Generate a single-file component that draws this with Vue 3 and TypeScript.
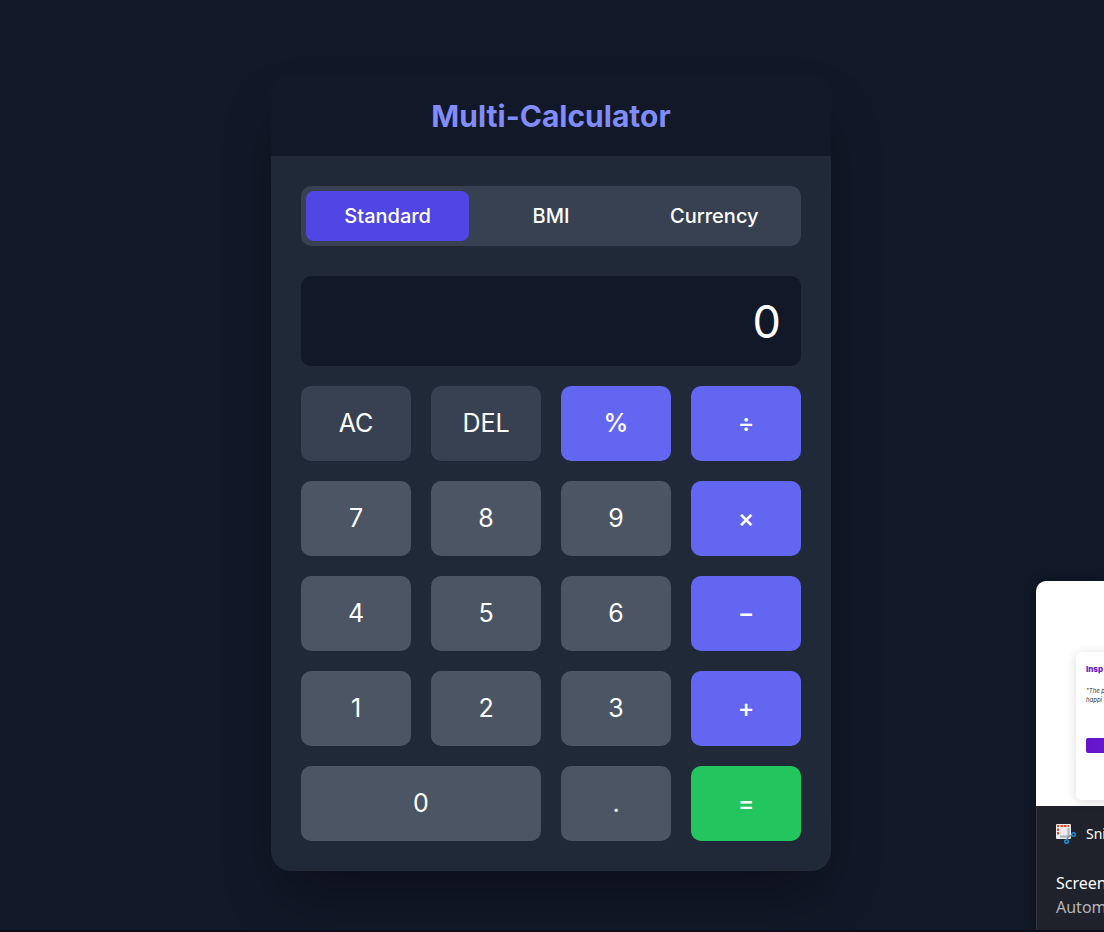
<script setup lang="ts">
import { ref } from 'vue'

type KeyKind = 'digit' | 'function' | 'operator' | 'equals'

interface Key {
  label: string
  kind: KeyKind
  wide?: boolean
}

const tabs: string[] = ['Standard', 'BMI', 'Currency']
const activeTab = ref('Standard')
const display = ref('0')
const stored = ref<number | null>(null)
const pending = ref('')
const fresh = ref(true)

const keys: Key[] = [
  { label: 'AC', kind: 'function' },
  { label: 'DEL', kind: 'function' },
  { label: '%', kind: 'operator' },
  { label: '÷', kind: 'operator' },
  { label: '7', kind: 'digit' },
  { label: '8', kind: 'digit' },
  { label: '9', kind: 'digit' },
  { label: '×', kind: 'operator' },
  { label: '4', kind: 'digit' },
  { label: '5', kind: 'digit' },
  { label: '6', kind: 'digit' },
  { label: '−', kind: 'operator' },
  { label: '1', kind: 'digit' },
  { label: '2', kind: 'digit' },
  { label: '3', kind: 'digit' },
  { label: '+', kind: 'operator' },
  { label: '0', kind: 'digit', wide: true },
  { label: '.', kind: 'digit' },
  { label: '=', kind: 'equals' },
]

function compute(a: number, b: number, op: string): number {
  if (op === '÷') return a / b
  if (op === '×') return a * b
  if (op === '−') return a - b
  return a + b
}

function settle(): void {
  if (pending.value && stored.value !== null) {
    display.value = String(compute(stored.value, Number(display.value), pending.value))
  }
  fresh.value = true
}

function press(key: Key): void {
  if (key.label === 'AC') {
    display.value = '0'
    stored.value = null
    pending.value = ''
    fresh.value = true
  } else if (key.label === 'DEL') {
    display.value = display.value.slice(0, -1) || '0'
  } else if (key.label === '%') {
    display.value = String(Number(display.value) / 100)
  } else if (key.kind === 'operator') {
    settle()
    stored.value = Number(display.value)
    pending.value = key.label
  } else if (key.kind === 'equals') {
    settle()
    pending.value = ''
  } else if (key.label === '.') {
    if (fresh.value) display.value = '0.'
    else if (!display.value.includes('.')) display.value += '.'
    fresh.value = false
  } else {
    display.value = fresh.value || display.value === '0' ? key.label : display.value + key.label
    fresh.value = false
  }
}
</script>

<template>
  <div class="page">
    <main class="card">
      <header class="card-header">
        <h1>Multi-Calculator</h1>
      </header>
      <div class="card-body">
        <nav class="tabs">
          <button
            v-for="tab in tabs"
            :key="tab"
            type="button"
            class="tab"
            :class="{ active: tab === activeTab }"
            @click="activeTab = tab"
          >
            {{ tab }}
          </button>
        </nav>
        <input class="display" type="text" readonly aria-label="Result" :value="display" />
        <div class="keypad">
          <button
            v-for="key in keys"
            :key="key.label"
            type="button"
            class="key"
            :class="[key.kind, { wide: key.wide }]"
            @click="press(key)"
          >
            {{ key.label }}
          </button>
        </div>
      </div>
    </main>

    <aside class="toast">
      <div class="preview">
        <div class="preview-card">
          <div class="preview-title">Insp</div>
          <div class="preview-quote">"The p<br />happi</div>
          <div class="preview-button"></div>
        </div>
      </div>
      <div class="toast-body">
        <div class="toast-app">
          <svg class="app-icon" viewBox="0 0 20 20" aria-hidden="true">
            <rect x="0" y="0" width="15" height="15" rx="1" fill="#e9ecef" />
            <path
              d="M1 1h2v2H1zM4.500 1h2.500v2H4.500zM8 1h2.500v2H8zM11.500 1H13v2h-1.500zM1 4.500h2V7H1zM1 8h2v2.500H1z"
              fill="#e8481c"
            />
            <path d="M12.500 4v9M4 12.500h9" fill="none" stroke="#a9b0b8" stroke-width="2" />
            <path d="M11 15.500l1.500-3 3.500-1.500" fill="none" stroke="#7d8790" stroke-width="1.500" />
            <circle cx="17.500" cy="10.500" r="1.800" fill="none" stroke="#1b93dc" stroke-width="1.400" />
            <circle cx="10.500" cy="17.500" r="1.800" fill="none" stroke="#1b93dc" stroke-width="1.400" />
          </svg>
          <span>Sni</span>
        </div>
        <div class="toast-title">Screen</div>
        <div class="toast-text">Autom</div>
      </div>
    </aside>
  </div>
</template>

<style>
body {
  margin: 0;
  background: #111827;
}
</style>

<style scoped>
* {
  box-sizing: border-box;
}

.page {
  position: relative;
  display: flex;
  justify-content: center;
  min-height: 100vh;
  padding: 76px 22px 59px 20px;
  overflow: hidden;
  background: #111827;
  border-bottom: 2px solid #0c0f1a;
  color: #fff;
  font-family: Inter, "Liberation Sans", sans-serif;
}

.card {
  width: 100%;
  max-width: 560px;
  align-self: flex-start;
  overflow: hidden;
  border-radius: 20px;
  background: #1f2937;
  box-shadow: 0 30px 60px -15px rgba(0, 0, 0, 0.4);
}

.card-header {
  padding: 20px;
  background: #111827;
  text-align: center;
}

h1 {
  margin: 0;
  color: #818cf8;
  font-size: 30px;
  font-weight: 700;
  line-height: 40px;
}

.card-body {
  padding: 30px;
}

.tabs {
  display: flex;
  padding: 5px;
  margin-bottom: 30px;
  border-radius: 10px;
  background: #374151;
}

button {
  border: 0;
  padding: 0;
  color: #fff;
  font-family: inherit;
  cursor: pointer;
}

.tab {
  flex: 1;
  padding: 10px;
  border-radius: 8px;
  background: transparent;
  font-size: 20px;
  font-weight: 500;
  line-height: 30px;
}

.tab.active {
  background: #4f46e5;
}

.display {
  display: block;
  width: 100%;
  height: 90px;
  padding: 20px;
  margin-bottom: 20px;
  border: 0;
  border-radius: 10px;
  outline: 0;
  background: #111827;
  color: #fff;
  font-family: inherit;
  font-size: 45px;
  line-height: 50px;
  text-align: right;
}

.keypad {
  display: grid;
  grid-template-columns: repeat(4, 1fr);
  gap: 20px;
}

.key {
  padding: 20px;
  border-radius: 10px;
  background: #4b5563;
  font-size: 25px;
  line-height: 35px;
}

.key.function {
  background: #374151;
}

.key.operator {
  background: #6366f1;
  font-weight: 500;
}

.key.equals {
  background: #22c55e;
  font-weight: 500;
}

.key.wide {
  grid-column: span 2;
}

.toast {
  position: absolute;
  right: 0;
  bottom: 0;
  width: 68px;
  overflow: hidden;
  border-top-left-radius: 10px;
  background: #20222b;
  box-shadow: 0 0 12px rgba(0, 0, 0, 0.4);
  font-family: "Noto Sans", "Open Sans", sans-serif;
  white-space: nowrap;
}

.preview {
  height: 225px;
  padding: 71px 0 6px 40px;
  background: #fff;
}

.preview-card {
  width: 200px;
  height: 148px;
  padding: 11px 10px;
  border-radius: 5px;
  background: #fff;
  box-shadow: 0 2px 12px rgba(0, 0, 0, 0.14);
  color: #333;
  font-family: Inter, sans-serif;
}

.preview-title {
  color: #6a11cb;
  font-size: 8px;
  font-weight: 800;
  line-height: 12px;
}

.preview-quote {
  margin-top: 11px;
  font-size: 6px;
  font-style: italic;
  line-height: 9px;
}

.preview-button {
  height: 15px;
  margin-top: 34px;
  border-radius: 2px;
  background: linear-gradient(90deg, #6a11cb, #2575fc);
}

.toast-body {
  height: 124px;
  padding: 18px 0 0 19px;
  border-left: 1px solid #343640;
}

.toast-app {
  display: flex;
  align-items: center;
  gap: 10px;
  margin-bottom: 27px;
  font-size: 14px;
  line-height: 20px;
}

.app-icon {
  flex: none;
  width: 20px;
  height: 20px;
}

.toast-title {
  font-size: 16px;
  line-height: 24px;
}

.toast-text {
  color: #b5b6ba;
  font-size: 16px;
  line-height: 24px;
}
</style>
